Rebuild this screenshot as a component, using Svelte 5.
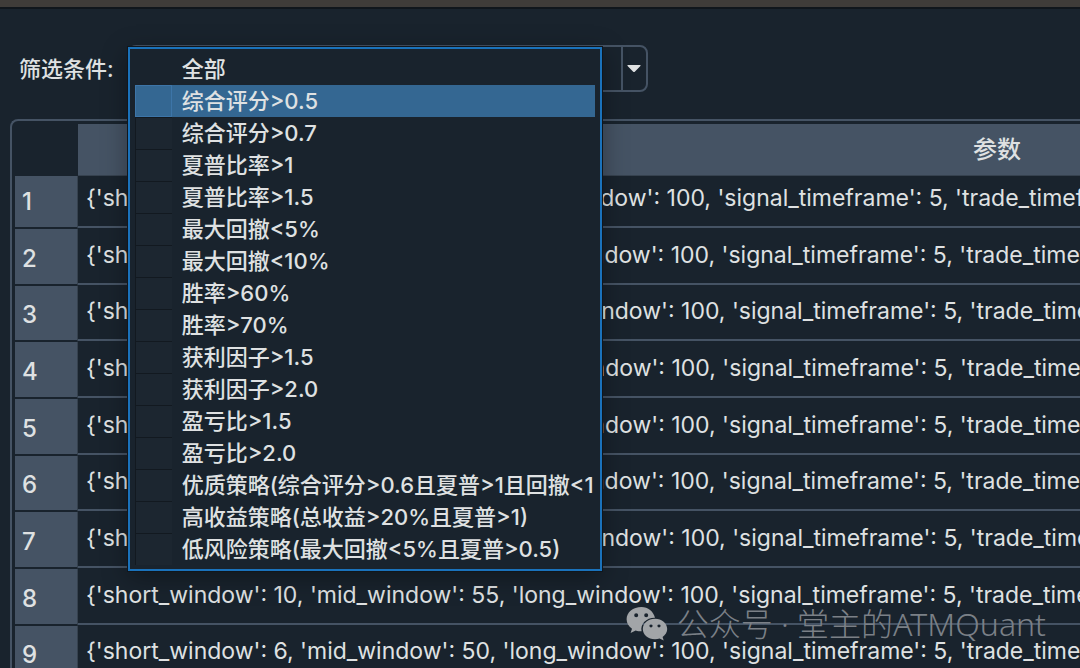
<script>
  const options = [
    '全部',
    '综合评分>0.5',
    '综合评分>0.7',
    '夏普比率>1',
    '夏普比率>1.5',
    '最大回撤<5%',
    '最大回撤<10%',
    '胜率>60%',
    '胜率>70%',
    '获利因子>1.5',
    '获利因子>2.0',
    '盈亏比>1.5',
    '盈亏比>2.0',
    '优质策略(综合评分>0.6且夏普>1且回撤<1',
    '高收益策略(总收益>20%且夏普>1)',
    '低风险策略(最大回撤<5%且夏普>0.5)'
  ];

  // [short, mid, long]
  const windows = [
    [5, 51, 100],
    [6, 55, 100],
    [10, 50, 100],
    [8, 50, 100],
    [6, 50, 100],
    [8, 55, 100],
    [10, 60, 100],
    [10, 55, 100],
    [6, 50, 100]
  ];

  let selected = $state('全部');
  let hovered = $state(1);
  let open = $state(true);

  const describe = ([s, m, l]) =>
    `{'short_window': ${s}, 'mid_window': ${m}, 'long_window': ${l}, 'signal_timeframe': 5, 'trade_timeframe': 1}`;

  function pick(option) {
    selected = option;
    open = false;
  }
</script>

<div class="window">
  <div class="titlebar"></div>

  <div class="filter">
    <label for="filter">筛选条件:</label>
    <div class="combo">
      <select id="filter" bind:value={selected}>
        {#each options as option}
          <option>{option}</option>
        {/each}
      </select>
      <span class="arrow">
        <svg width="14" height="8" viewBox="0 0 14 8"><path d="M.8 0h12.4q.8.4.2 1L7.8 6.8q-.8.6-1.6 0L.6 1Q0 .4.8 0z" /></svg>
      </span>

      {#if open}
        <div class="popup" role="listbox" aria-label="筛选条件">
          {#each options as option, i}
            <button
              type="button"
              role="option"
              aria-selected={option === selected}
              class="option"
              class:active={i === hovered}
              onmouseenter={() => (hovered = i)}
              onclick={() => pick(option)}
            >
              <span class="check" class:blank={i === 0}></span>
              <span class="text">{option}</span>
            </button>
          {/each}
        </div>
      {/if}
    </div>
  </div>

  <div class="frame">
    <table>
      <thead>
        <tr>
          <td class="corner"></td>
          <th class="params" scope="col">参数</th>
        </tr>
      </thead>
      <tbody>
        {#each windows as row, i}
          <tr>
            <th class="num" scope="row"><span>{i + 1}</span></th>
            <td class="value">{describe(row)}</td>
          </tr>
        {/each}
      </tbody>
    </table>
  </div>

  <div class="watermark">
    <svg width="42" height="36" viewBox="0 0 42 36">
      <path
        fill-rule="evenodd"
        d="M15.500 1C7 1 .6 6.400.6 13.200c0 3.900 2 7.200 5.400 9.500L4.600 27l5.100-2.600c2 .6 3.700.8 5.900.8C14 18 20.500 11.500 29 11.700 27.500 5.500 22 1 15.500 1zM10.200 7.200a2 2 0 1 1 0 4 2 2 0 0 1 0-4zm10 0a2 2 0 1 1 0 4 2 2 0 0 1 0-4z"
      />
      <path
        fill-rule="evenodd"
        d="M29 12.800c-7 0-12.200 4.500-12.200 10.200S22 33.200 29 33.200c1.700 0 3.200-.3 4.600-.8l4.100 2.200-1.100-3.700c2.800-1.900 4.600-4.700 4.600-7.900 0-5.700-5.300-10.200-12.200-10.200zm-4 5.400a1.600 1.600 0 1 1 0 3.200 1.600 1.600 0 0 1 0-3.200zm8 0a1.600 1.600 0 1 1 0 3.200 1.600 1.600 0 0 1 0-3.200z"
      />
    </svg>
    <span>公众号 · 堂主的ATMQuant</span>
  </div>
</div>

<style>
:global(body) {
  background: #19232d;
}

.window {
  position: relative;
  height: 100vh;
  overflow: hidden;
  display: flex;
  flex-direction: column;
  background: #19232d;
  color: #dfe1e2;
  font-family: Inter, "Noto Sans CJK SC", sans-serif;
  font-size: 22px;
  font-weight: 500;
  line-height: 28px;
}

.titlebar {
  flex: none;
  height: 7px;
  background: #3f3c39;
  border-bottom: 2px solid #10161c;
}

/* Filter bar */
.filter {
  display: flex;
  align-items: center;
  gap: 14px;
  padding: 36px 19px 27px;
}
.combo {
  position: relative;
  display: flex;
  flex: 0 1 520px;
  height: 47px;
  box-sizing: border-box;
  border: 2px solid #455364;
  border-radius: 8px;
}
select {
  flex: 1;
  min-width: 0;
  padding: 0 8px;
  appearance: none;
  border: 0;
  outline: 0;
  background: transparent;
  color: inherit;
  font: inherit;
}
.arrow {
  display: flex;
  align-items: center;
  justify-content: center;
  width: 23px;
  border-left: 2px solid #455364;
  pointer-events: none;
}
.arrow svg { fill: #dfe1e2; }

/* Popup list */
.popup {
  position: absolute;
  z-index: 10;
  top: 0;
  left: -2px;
  right: 44px;
  padding: 4px 5px;
  overflow: hidden;
  border: 2px solid #1a72bb;
  background: #19232d;
  box-shadow: 0 0 0 1px #10161c, 0 6px 24px rgba(0,0,0,0.35);
}
.option {
  display: flex;
  width: 100%;
  height: 32px;
  padding: 0;
  border: 0;
  background: transparent;
  color: inherit;
  font: inherit;
  text-align: left;
  white-space: nowrap;
}
.option.active { background: #346792; }
.check {
  flex: none;
  box-sizing: border-box;
  width: 37px;
  margin-right: 10px;
  border-top: 1px solid #121920;
  border-left: 1px solid #121920;
  background: #1c2630;
}
.check.blank {
  border-color: transparent;
  background: transparent;
}
.active .check {
  border: 1px solid #3d75a8;
  background: #346792;
}
.text { line-height: 32px; }

/* Table */
.frame {
  flex: 1;
  min-height: 0;
  margin-left: 10px;
  padding: 3px 0 0 3px;
  overflow: hidden;
  border: 2px solid #455364;
  border-width: 2px 0 0 2px;
  border-radius: 8px 0 0 0;
}
table {
  border-collapse: separate;
  border-spacing: 0;
}
th, td {
  padding: 0;
  font-weight: inherit;
}
.corner { min-width: 63px; }
.params {
  height: 51px;
  min-width: 1838px;
  border-bottom: 1px solid #36424f;
  background: #455364;
  font-size: 24px;
}
tbody tr { height: 57px; }
tbody tr:nth-child(3n) { height: 56px; }
tbody tr:first-child { height: 53px; }
.num {
  height: inherit;
  box-sizing: border-box;
  border-right: 1px solid #36424f;
  border-bottom: 2px solid #19232d;
  background: #455364;
  text-align: left;
  vertical-align: bottom;
}
.num span {
  display: block;
  padding: 0 7px 11px;
  font-size: 24px;
}
.value {
  padding: 0 8px 17px;
  vertical-align: bottom;
  white-space: nowrap;
  font-size: 23px;
  font-weight: 400;
  background: linear-gradient(#455364, #455364) left bottom 1px / 100% 2px no-repeat;
}

.watermark {
  position: absolute;
  right: 34px;
  bottom: 24px;
  display: flex;
  align-items: center;
  gap: 9px;
  color: #7b8087;
  font-family: "Noto Sans", "Noto Sans CJK SC", sans-serif;
  font-size: 32px;
  font-weight: 300;
  line-height: 40px;
}
.watermark svg { fill: #a2a5a8; }
</style>
